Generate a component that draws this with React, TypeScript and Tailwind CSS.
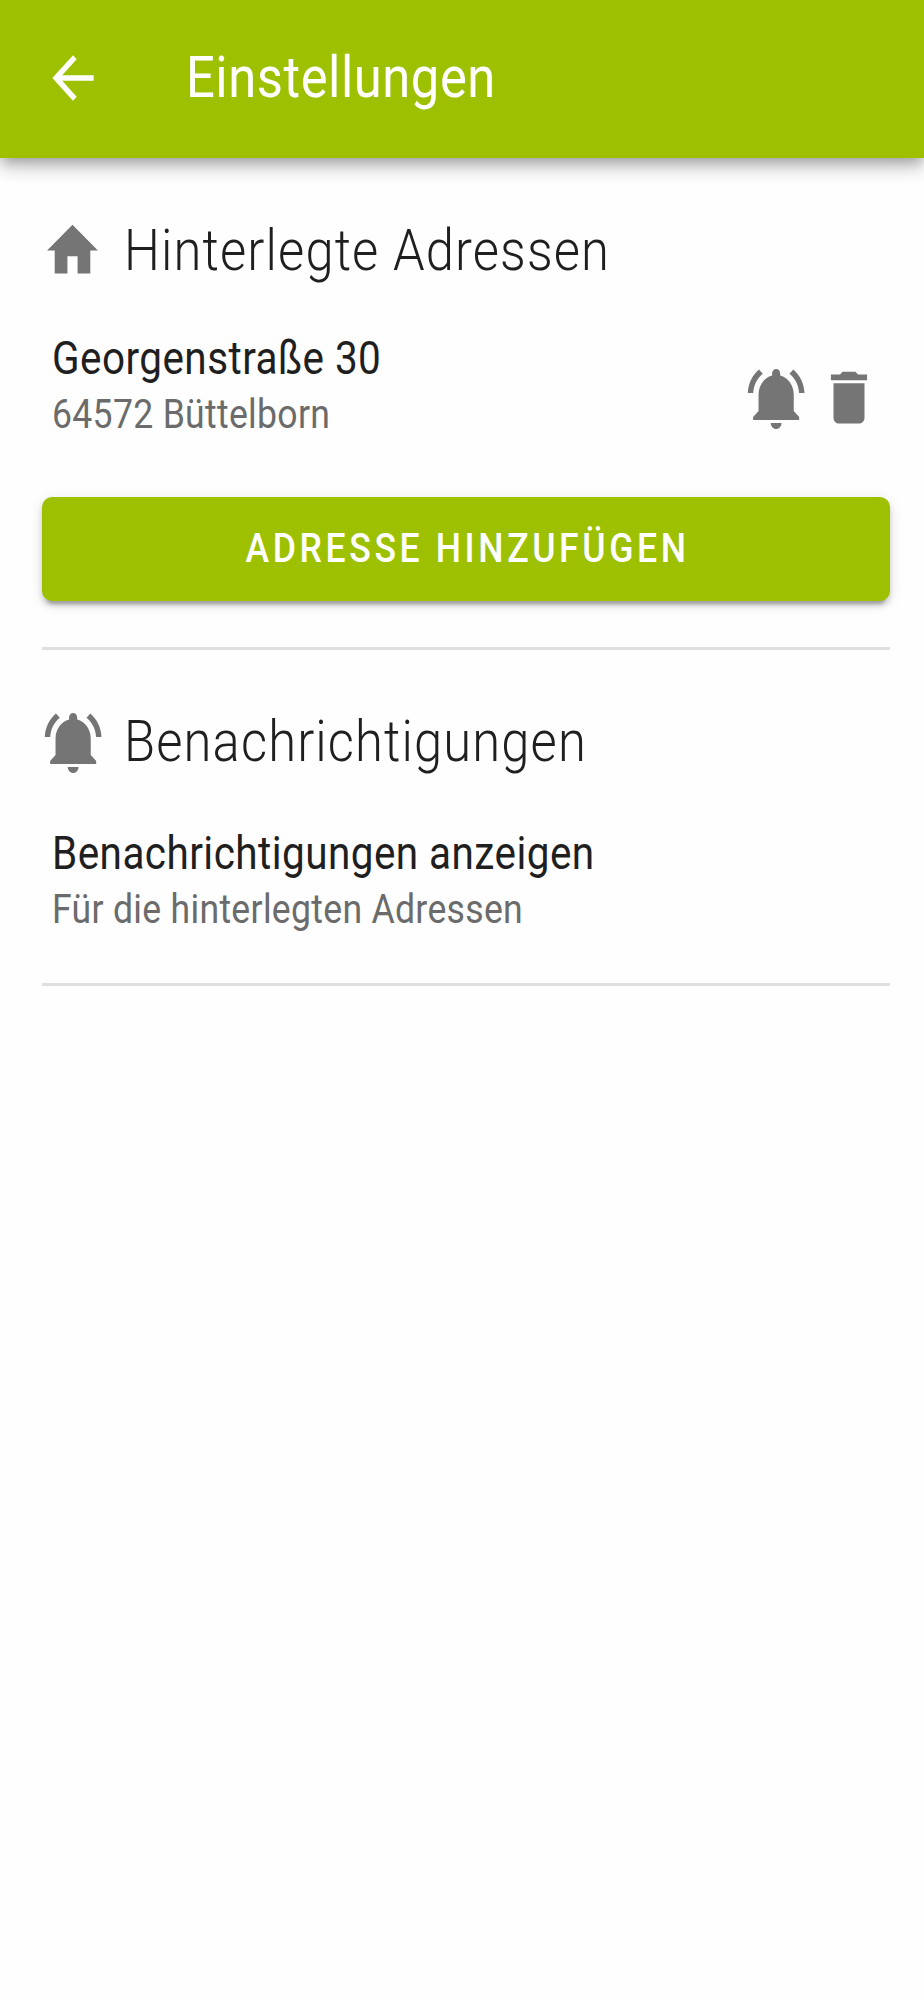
import React from "react";

const FONT = "font-['Roboto',sans-serif]";

function Icon({ d, className }: { d: string; className: string }) {
  return (
    <svg viewBox="0 0 24 24" preserveAspectRatio="none" className={`shrink-0 fill-current ${className}`} aria-hidden="true">
      <path d={d} />
    </svg>
  );
}

const ARROW = "M20 11H7.83l5.59-5.59L12 4l-8 8 8 8 1.41-1.41L7.83 13H20v-2z";
const HOME = "M10 20v-6h4v6h5v-8h3L12 3 2 12h3v8z";
const BELL =
  "M11.5 22c1.1 0 2-.9 2-2h-4c0 1.1.9 2 2 2zM18 10.5c0-3.07-2.13-5.64-5-6.32V3.5c0-.83-.67-1.5-1.5-1.5S10 2.67 10 3.5v.68c-2.87.68-5 3.25-5 6.32V16l-2 2v1h17v-1l-2-2v-5.5zM6.58 3.58L5.15 2.15C2.76 3.97 1.18 6.8 1.03 10h2c.15-2.65 1.51-4.97 3.55-6.42zM19.97 10h2c-.15-3.2-1.73-6.03-4.13-7.85l-1.43 1.43c2.04 1.45 3.41 3.77 3.56 6.42z";
const TRASH = "M19 4h-3.5l-1-1h-5l-1 1H5v2h14V4zM6 19c0 1.1.9 2 2 2h8c1.1 0 2-.9 2-2V7H6v12z";

function SectionTitle({ children }: { children: React.ReactNode }) {
  return (
    <h2 className="origin-left scale-x-[0.89] whitespace-nowrap text-[57px] leading-[68px] font-light tracking-[1.25px] text-[#1f1f1f]">
      {children}
    </h2>
  );
}

function Entry({ title, detail }: { title: string; detail: string }) {
  return (
    <div className="origin-left scale-x-[0.89] whitespace-nowrap">
      <p className="text-[45.5px] leading-[54px] tracking-[0.49px] text-[#1f1f1f]">{title}</p>
      <p className="text-[40px] leading-[57px] tracking-[0.33px] text-[#6b6b6b]">{detail}</p>
    </div>
  );
}

export default function App() {
  return (
    <div className={`flex min-h-[2000px] w-[924px] flex-col overflow-hidden bg-[#fefefe] ${FONT}`}>
      <header className="flex h-[158px] shrink-0 items-center bg-[#9dc100] pb-[3px] pl-[42px] text-white shadow-[0_5px_11px_-3px_rgba(0,0,0,0.24),0_11px_14px_rgba(0,0,0,0.14),0_3px_27px_rgba(0,0,0,0.12)]">
        <Icon d={ARROW} className="h-[68px] w-[62px]" />
        <h1 className="ml-[82px] origin-left scale-x-[0.89] whitespace-nowrap text-[57px] leading-[68px] tracking-[0.6px]">
          Einstellungen
        </h1>
      </header>
      <main className="flex flex-col pr-[34px] pl-[42px]">
        <section className="flex h-[492px] flex-col border-b-3 border-[#dfdfdf] pt-[59px]">
          <div className="flex h-[68px] items-center">
            <Icon d={HOME} className="mb-[2px] h-[69px] w-[61px] text-[#757575]" />
            <div className="ml-[21px]">
              <SectionTitle>Hinterlegte Adressen</SectionTitle>
            </div>
          </div>
          <div className="mt-[47px] flex h-[110px] items-start justify-between px-[10px]">
            <Entry title="Georgenstraße 30" detail="64572 Büttelborn" />
            <div className="mt-[31px] flex items-start text-[#757575]">
              <Icon d={BELL} className="h-[72px] w-[65px]" />
              <Icon d={TRASH} className="ml-[8px] h-[69px] w-[62px]" />
            </div>
          </div>
          <button className="mt-[55px] flex h-[104px] shrink-0 items-center justify-center rounded-[10px] bg-[#9dc100] pl-[3px] text-white shadow-[0_8px_3px_-5px_rgba(0,0,0,0.2),0_5px_5px_rgba(0,0,0,0.14),0_3px_14px_rgba(0,0,0,0.12)]">
            <span className="scale-x-[0.89] whitespace-nowrap text-[40px] leading-[48px] font-medium tracking-[4.05px]">
              ADRESSE HINZUFÜGEN
            </span>
          </button>
        </section>
        <section className="flex h-[336px] flex-col border-b-3 border-[#dfdfdf] pt-[58px]">
          <div className="flex h-[68px] items-center">
            <Icon d={BELL} className="mt-[2px] h-[72px] w-[65px] text-[#757575]" />
            <div className="ml-[17px]">
              <SectionTitle>Benachrichtigungen</SectionTitle>
            </div>
          </div>
          <div className="mt-[51px] pl-[10px]">
            <Entry title="Benachrichtigungen anzeigen" detail="Für die hinterlegten Adressen" />
          </div>
        </section>
      </main>
    </div>
  );
}
